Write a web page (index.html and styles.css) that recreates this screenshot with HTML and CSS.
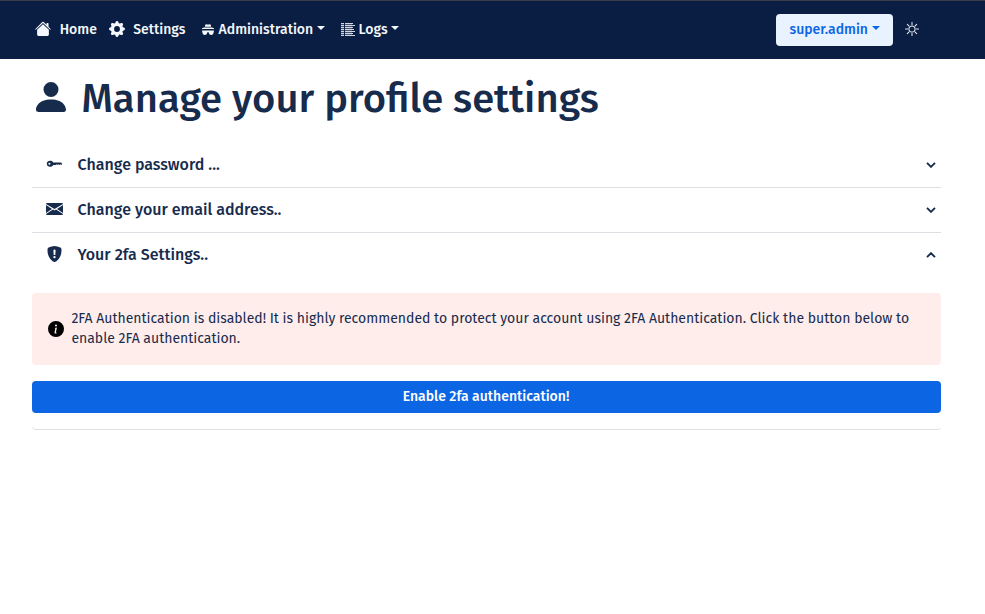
FILE: index.html
```html
<!DOCTYPE html>
<html lang="en">
<head>
<meta charset="utf-8">
<title>Profile settings</title>
<link rel="stylesheet" href="styles.css">
</head>
<body>
<nav class="navbar">
  <a class="nav-item home"><svg class="ic16" viewBox="0 0 16 16"><path d="m8 3.300 5.900 5.500v4.800a1.400 1.400 0 0 1-1.400 1.400h-9a1.400 1.400 0 0 1-1.400-1.400V8.800z"/><path d="M7.290 1a1 1 0 0 1 1.420 0L11.500 3.800V2.500a.5.5 0 0 1 .5-.5h1a.5.5 0 0 1 .5.5v3.300l2.100 2.100a.5.5 0 0 1-.7.7L8 1.900 1.100 8.600a.5.5 0 0 1-.7-.7z"/></svg><span>Home</span></a>
  <a class="nav-item settings"><svg class="ic16" viewBox="0 0 16 16"><path d="M9.405 1.050c-.413-1.400-2.397-1.400-2.810 0l-.1.34a1.464 1.464 0 0 1-2.105.872l-.31-.17c-1.283-.698-2.686.705-1.987 1.987l.169.311c.446.82.023 1.841-.872 2.105l-.34.1c-1.400.413-1.400 2.397 0 2.810l.34.1a1.464 1.464 0 0 1 .872 2.105l-.17.31c-.698 1.283.705 2.686 1.987 1.987l.311-.169a1.464 1.464 0 0 1 2.105.872l.1.34c.413 1.400 2.397 1.400 2.810 0l.1-.34a1.464 1.464 0 0 1 2.105-.872l.31.17c1.283.698 2.686-.705 1.987-1.987l-.169-.311a1.464 1.464 0 0 1 .872-2.105l.34-.1c1.400-.413 1.400-2.397 0-2.810l-.34-.1a1.464 1.464 0 0 1-.872-2.105l.17-.31c.698-1.283-.705-2.686-1.987-1.987l-.311.169a1.464 1.464 0 0 1-2.105-.872l-.1-.34zM8 10.930a2.929 2.929 0 1 1 0-5.860 2.929 2.929 0 0 1 0 5.858z"/></svg><span>Settings</span></a>
  <a class="nav-item admin"><svg class="ic12" viewBox="0 0 12 12"><path d="M3.300.8Q3.800-.2 5 .4q1 .3 2 0Q8.200-.2 8.700.8L9.200 2.800H2.800zM2 3.500h8L12 4.300v.8H0v-.8zM0 6.500h12v1h-.4v1.200a2.400 2.400 0 0 1-4.700.5L6.400 8h-.8L5.100 9.200a2.400 2.400 0 0 1-4.700-.5V7.500H0z"/></svg><span>Administration</span><i class="caret"></i></a>
  <a class="nav-item logs"><svg class="ic14" viewBox="0 0 14 13"><path d="M0 0h3v1H0zM0 2h3v1H0zM0 4h3v1H0zM0 6h3v1H0zM0 8h3v1H0zM0 10h3v1H0zM0 12h3v1H0zM4 0h8v1H4zM4 2h10v1H4zM4 4h8v1H4zM4 6h9v1H4zM4 8h10v1H4zM4 10h8v1H4zM4 12h10v1H4z"/><path opacity=".3" d="M0 0h3v13H0zM4 0h7v13H4z"/></svg><span>Logs</span><i class="caret"></i></a>
  <button class="user">super.admin<i class="caret"></i></button>
  <svg class="sun" viewBox="0 0 16 16"><circle cx="8" cy="8" r="3.500"/><path d="M8 .5v2.500M8 13v2.500M.5 8H3M13 8h2.500M2.700 2.700l1.700 1.700M11.600 11.600l1.700 1.700M13.300 2.700l-1.700 1.700M4.400 11.600l-1.700 1.700"/></svg>
</nav>
<main>
  <h1><svg class="person" viewBox="0 0 16 16"><path d="M3 14s-1 0-1-1 1-4 6-4 6 3 6 4-1 1-1 1H3Zm5-6a3 3 0 1 0 0-6 3 3 0 0 0 0 6Z"/></svg><span>Manage your profile settings</span></h1>
  <section class="accordion">
    <div class="row"><svg class="lead" viewBox="0 0 16 16"><path fill-rule="evenodd" d="M3.600 4.800c1.500 0 2.600.6 3.200 1.800h7.800l1.100 1.300-1 1.100-.9-.7-.8.700-.9-.7-.8.700-.9-.7-1 .7H6.800c-.6 1.200-1.700 1.800-3.200 1.800C1.700 10.800.3 9.600.3 7.800s1.400-3 3.300-3zM2.900 6.800a1 1 0 1 0 0 2 1 1 0 0 0 0-2z"/></svg><span>Change password ...</span><svg class="chev" viewBox="0 0 10 6"><path d="m1 .8 4 4 4-4"/></svg></div>
    <div class="row"><svg class="lead mail" viewBox="0 0 17 12"><path d="M1 0h15q.8 0 1 .9L8.500 6 0 .9Q.2 0 1 0zM0 2.100 6 5.900 0 9.900zM17 2.100v7.800l-6-4zM7 6.600l1.500.9 1.500-.9 7 4.500q-.2.9-1 .9H1q-.8 0-1-.9z"/></svg><span>Change your email address..</span><svg class="chev" viewBox="0 0 10 6"><path d="m1 .8 4 4 4-4"/></svg></div>
    <div class="row open"><svg class="lead" viewBox="0 0 16 16"><path fill-rule="evenodd" d="M8 0c-.69 0-1.843.265-2.928.56-1.110.3-2.229.655-2.887.87a1.540 1.540 0 0 0-1.044 1.262c-.596 4.477.787 7.795 2.465 9.990a11.777 11.777 0 0 0 2.517 2.453c.386.273.744.482 1.048.625.28.132.581.24.829.24s.548-.108.829-.24a7.159 7.159 0 0 0 1.048-.625 11.775 11.775 0 0 0 2.517-2.453c1.678-2.195 3.061-5.513 2.465-9.990a1.541 1.541 0 0 0-1.044-1.263 62.467 62.467 0 0 0-2.887-.87C9.843.266 8.690 0 8 0zm-.8 9L6.900 4.500a1.100 1.100 0 0 1 2.200 0L8.800 9zM8 12.300a1.150 1.150 0 1 1 0-2.300 1.150 1.150 0 0 1 0 2.300z"/></svg><span>Your 2fa Settings..</span><svg class="chev" viewBox="0 0 10 6"><path d="m1 5.200 4-4 4 4"/></svg></div>
    <div class="panel">
      <div class="alert"><svg class="info" viewBox="0 0 16 16"><path d="M8 16A8 8 0 1 0 8 0a8 8 0 0 0 0 16zm.930-9.412-1 4.705c-.070.340.029.533.304.533.194 0 .487-.070.686-.246l-.088.416c-.287.346-.920.598-1.465.598-.703 0-1.002-.422-.808-1.319l.738-3.468c.064-.293.006-.399-.287-.470l-.451-.081.082-.381 2.290-.287zM8 5.500a1 1 0 1 1 0-2 1 1 0 0 1 0 2z"/></svg><p>2FA Authentication is disabled! It is highly recommended to protect your account using 2FA Authentication. Click the button below to enable 2FA authentication.</p></div>
      <button class="enable">Enable 2fa authentication!</button>
    </div>
  </section>
</main>
</body>
</html>
```
FILE: styles.css
```css
* { box-sizing: border-box; }
body { margin: 0; background: #fff; color: #172b4d; font: 400 14px/20px "Fira Sans", "Noto Sans", sans-serif; }
svg { display: block; flex: none; fill: currentColor; }
.navbar { display: flex; align-items: center; height: 59px; padding: 0 65px 0 35px; border-top: 1px solid #3a3f47; background: #091e42; color: #f4f7fc; font-weight: 500; }
.nav-item { display: flex; align-items: center; }
.ic16 { width: 16px; height: 16px; margin: -2px 8px 0 0; }
.home { width: 74px; }
.home .ic16 { margin-right: 8.700px; }
.settings { width: 93px; }
.settings .ic16 { margin-right: 8.200px; }
.admin { width: 139px; }
.ic12 { width: 12px; height: 12px; margin: -1px 4.600px 0 0; }
.ic14 { width: 14px; height: 13px; margin: -2px 3.600px 0 0; opacity: .85; }
.caret { width: 0; margin: -5px 0 0 3.500px; border: 4.200px solid transparent; border-top-color: currentColor; border-bottom: 0; }
.user { display: flex; align-items: center; justify-content: center; width: 117px; height: 32px; margin: 0 13px 0 auto; padding: 0; border: 0; border-radius: 4px; background: #e9f2ff; color: #0c66e4; font: inherit; }
.sun { width: 14px; height: 14px; margin: -2px .6px 0 -.6px; fill: none; stroke: #e4e8ef; stroke-width: 1.2; stroke-linecap: round; }
main { padding: 16px 44px 0 32px; }
h1 { display: flex; align-items: flex-start; margin: 0 0 20px; font-size: 40px; font-weight: 500; line-height: 48px; }
.person { width: 40px; height: 40px; margin: 2px 10.200px 0 -.6px; }
.accordion { border-bottom: 1px solid #dcdfe4; border-radius: 4px; }
.row { display: flex; align-items: center; height: 45px; padding: 0 5px 0 14px; border-bottom: 1px solid #dcdfe4; font-size: 16px; font-weight: 500; line-height: 20px; }
.row.open { border-color: transparent; }
.lead { width: 17px; height: 16px; margin: -2px 14.600px 0 0; }
.mail { height: 12px; }
.chev { width: 10px; height: 6px; margin-left: auto; fill: none; stroke: #172b4d; stroke-width: 1.900; }
.panel { padding: 15px 0 16px; }
.alert { display: flex; align-items: center; height: 72px; padding: 0 16px; border-radius: 4px; background: #ffedeb; }
.alert p { margin: -1px 0 0; }
.info { width: 16px; height: 16px; margin-right: 7.400px; color: #000; }
.enable { display: block; width: 100%; height: 32px; margin-top: 16px; padding: 0 1px 1px 0; border: 0; border-radius: 4px; background: #0c66e4; color: #fff; font: inherit; font-weight: 500; }
```
